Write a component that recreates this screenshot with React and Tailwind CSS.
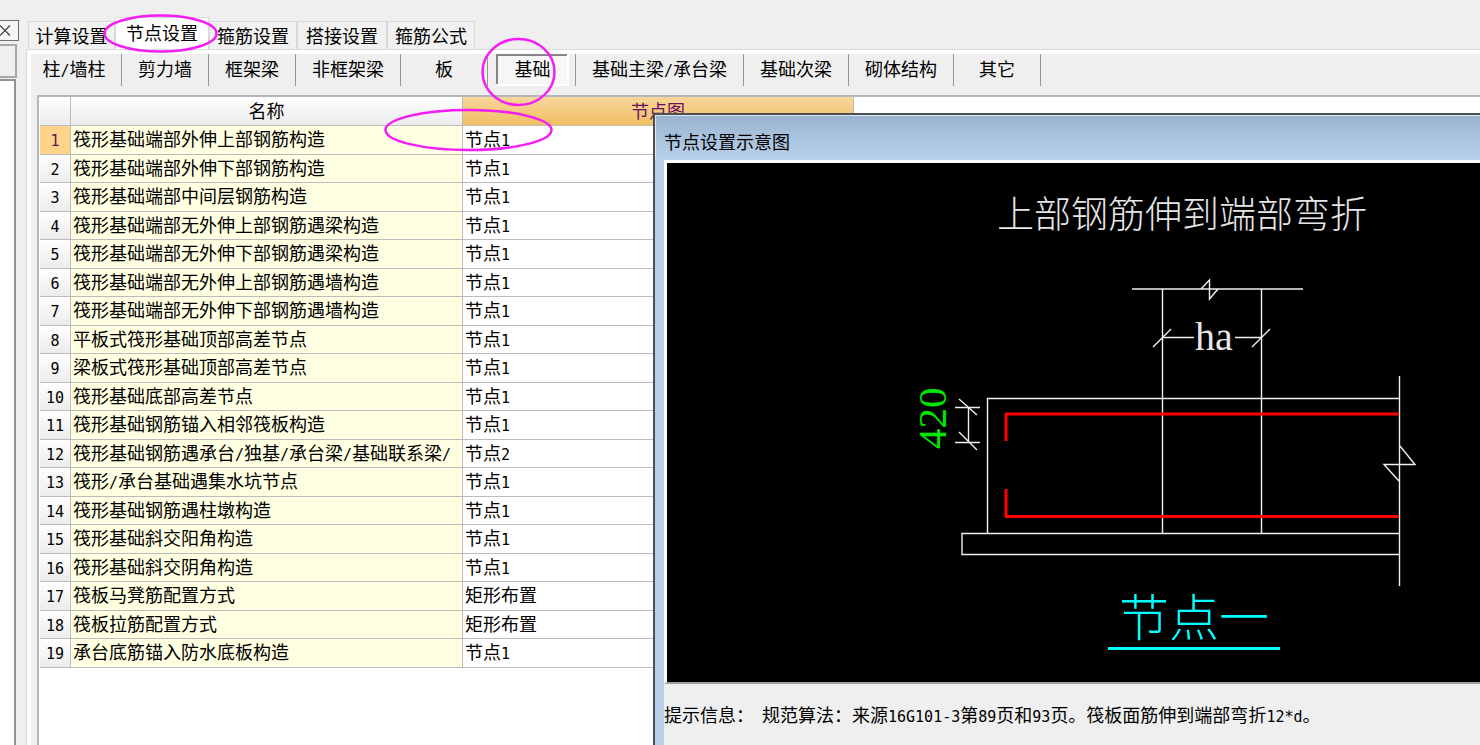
import React from 'react';
import { clsx } from 'clsx';

const mainTabs = [
  { label: '计算设置', width: 'w-[87px]' },
  { label: '节点设置', width: 'w-[94px]', active: true },
  { label: '箍筋设置', width: 'w-[88px]' },
  { label: '搭接设置', width: 'w-[90px]' },
  { label: '箍筋公式', width: 'w-[88px]' },
];

const subTabs = [
  { label: '柱/墙柱', width: 'w-[91px]', pad: 'pr-1' },
  { label: '剪力墙', width: 'w-[87px]' },
  { label: '框架梁', width: 'w-[87px]' },
  { label: '非框架梁', width: 'w-[105px]' },
  { label: '板', width: 'w-[87px]' },
  { label: '基础', width: 'w-[88px]', active: true },
  { label: '基础主梁/承台梁', width: 'w-[168px]' },
  { label: '基础次梁', width: 'w-[105px]' },
  { label: '砌体结构', width: 'w-[105px]' },
  { label: '其它', width: 'w-[87px]' },
];

const rows = [
  ['筏形基础端部外伸上部钢筋构造', '节点1'],
  ['筏形基础端部外伸下部钢筋构造', '节点1'],
  ['筏形基础端部中间层钢筋构造', '节点1'],
  ['筏形基础端部无外伸上部钢筋遇梁构造', '节点1'],
  ['筏形基础端部无外伸下部钢筋遇梁构造', '节点1'],
  ['筏形基础端部无外伸上部钢筋遇墙构造', '节点1'],
  ['筏形基础端部无外伸下部钢筋遇墙构造', '节点1'],
  ['平板式筏形基础顶部高差节点', '节点1'],
  ['梁板式筏形基础顶部高差节点', '节点1'],
  ['筏形基础底部高差节点', '节点1'],
  ['筏形基础钢筋锚入相邻筏板构造', '节点1'],
  ['筏形基础钢筋遇承台/独基/承台梁/基础联系梁/', '节点2'],
  ['筏形/承台基础遇集水坑节点', '节点1'],
  ['筏形基础钢筋遇柱墩构造', '节点1'],
  ['筏形基础斜交阳角构造', '节点1'],
  ['筏形基础斜交阴角构造', '节点1'],
  ['筏板马凳筋配置方式', '矩形布置'],
  ['筏板拉筋配置方式', '矩形布置'],
  ['承台底筋锚入防水底板构造', '节点1'],
];

// Latin runs are set in a half-width face so that two of them fill one CJK cell
const Mixed = ({ text }) =>
  String(text)
    .split(/([\x21-\x7e]+)/)
    .map((part, i) =>
      i % 2 ? (
        <span key={i} className="text-[15px] leading-none font-['DejaVu_Sans_Mono',monospace]">
          {part}
        </span>
      ) : (
        part
      )
    );

const SideStrip = () => (
  <div className="w-[19px] shrink-0 flex flex-col pt-5">
    <button
      aria-label="关闭"
      className="w-[19px] h-[21px] border border-l-0 border-[#707070] bg-[#f4f4f4] flex items-center"
    >
      <svg width="11" height="11" viewBox="0 0 11 11" stroke="#404040" strokeWidth="1.2">
        <path d="M0 0.5 L10 10.5 M10 0.5 L0 10.5" />
      </svg>
    </button>
    <div className="mt-[3px] mr-[2px] h-[34px] border-2 border-l-0 border-[#a8a8a8] bg-[#efefef]" />
    <div className="mt-[1px] mr-[3px] flex-1 border-t-2 border-r-2 border-[#8d949c] bg-white" />
  </div>
);

const MainTabs = () => (
  <div role="tablist" className="flex items-end pl-[2px] h-8">
    {mainTabs.map((tab) => (
      <button
        key={tab.label}
        role="tab"
        aria-selected={!!tab.active}
        className={clsx(
          'whitespace-nowrap border border-b-0 border-[#dadada] flex justify-center',
          tab.width,
          tab.active ? 'h-8 bg-white items-start pt-1' : 'h-[28px] bg-[#f1f1f1] items-center pt-[2px]'
        )}
      >
        {tab.label}
      </button>
    ))}
  </div>
);

const SubTabs = () => (
  <div className="flex items-center h-[32px]">
    {subTabs.map((tab) => (
      <div
        key={tab.label}
        className={clsx('h-8 shrink-0 border-r border-[#969696]', tab.width, tab.active && 'px-2')}
      >
        <button
          className={clsx(
            'w-full h-[30px] whitespace-nowrap',
            tab.pad,
            tab.active
              ? 'border-t-2 border-l-2 border-[#858585] bg-[#f7f7f7] shadow-[1px_1px_0_1px_#fff]'
              : 'pt-[2px]'
          )}
        >
          <Mixed text={tab.label} />
        </button>
      </div>
    ))}
  </div>
);

const NodeTable = () => (
  <table className="table-fixed border-separate border-spacing-0 w-[814px]">
    <colgroup>
      <col className="w-[31px]" />
      <col className="w-[392px]" />
      <col className="w-[391px]" />
    </colgroup>
    <thead>
      <tr className="h-[29px]">
        <th className="border-b border-r border-[#bcbcbc] bg-linear-to-b from-white to-[#ececec]" />
        <th className="p-0 pt-[2px] font-normal border-b border-r border-[#bcbcbc] bg-linear-to-b from-white to-[#ececec]">
          名称
        </th>
        <th className="p-0 pt-[2px] font-normal text-[#69105f] border-b border-r border-[#bcbcbc] bg-linear-to-b from-[#f9d69b] to-[#f0bf60]">
          节点图
        </th>
      </tr>
    </thead>
    <tbody>
      {rows.map(([name, node], i) => (
        <tr key={name} className="odd:h-[29px] even:h-[28px]">
          <th
            scope="row"
            className={clsx(
              'p-0 font-normal border-b border-r border-[#bcbcbc]',
              i === 0 ? 'bg-[#ffd48a] text-[#69105f]' : 'bg-linear-to-b from-white to-[#ececec]'
            )}
          >
            <Mixed text={i + 1} />
          </th>
          <td className="p-0 pl-[2px] whitespace-nowrap overflow-hidden bg-[#ffffe1] border-b border-r border-[#bcbcbc]">
            <Mixed text={name} />
          </td>
          <td className="p-0 pl-[2px] border-b border-r border-[#bcbcbc]">
            <Mixed text={node} />
          </td>
        </tr>
      ))}
    </tbody>
  </table>
);

// Section through the raft edge: column stub, slab, cushion and the two bent bars
const NodeDrawing = () => (
  <svg
    className="block"
    width="813"
    height="519"
    viewBox="667 163 813 519"
    fill="none"
    fontFamily='"Liberation Serif", "Noto Sans CJK SC", serif'
  >
    <text x="997" y="228" fontSize="37" fontWeight="300" fill="#e6e6e6">上部钢筋伸到端部弯折</text>

    <g stroke="#f0f0f0" strokeWidth="1.4">
      <path d="M1132 289H1303 M1201 289L1209.500 280V299L1218 289" />
      <path d="M1162.500 289V533 M1261.500 289V533" />
      <path d="M1163 337.500H1194 M1235 337.500H1261" />
      <path d="M1153 347L1171 329 M1252 347L1270 329" />
      <path d="M1400 398.500H987.500V533.500" />
      <path d="M1400 533.500H962V554.500H1400" />
      <path d="M1399.500 376V586 M1400 446L1415 464.500H1384L1399 481" />
      <path d="M955 407.500H980 M955 442.500H980 M968.500 407V442" />
      <path d="M959 399L977 415 M959 432L977 450" />
    </g>

    <g stroke="#ff0000" strokeWidth="3" strokeLinejoin="round">
      <path d="M1399 414H1006V441" />
      <path d="M1399 516.500H1006V489" />
    </g>

    <text x="1195" y="350" fontSize="40" fill="#e6e6e6">ha</text>
    <text transform="translate(946 449) rotate(-90)" fontSize="41" fill="#00e600">420</text>
    <text x="1119" y="636" fontSize="50" fontWeight="300" fill="#00ffff">节点一</text>
    <path d="M1108 648.500H1280" stroke="#00ffff" strokeWidth="3" />
  </svg>
);

const DiagramWindow = () => (
  <section className="absolute left-[653px] right-0 top-[113px] bottom-0 overflow-hidden flex flex-col border-t-2 border-l-2 border-[#4c4f53] bg-[#b9d1ea]">
    <header className="h-[45px] shrink-0 pl-2 pt-[15px] border-t border-l border-[#dce6f0] bg-linear-to-b from-[#9ab4d0] to-[#b9d1ea]">
      <h2>节点设置示意图</h2>
    </header>
    <div className="ml-[9px] flex-1 flex flex-col bg-[#efefef]">
      <div className="border-t-3 border-l-3 border-t-white border-l-white border-b-2 border-b-[#a0a0a0] bg-black overflow-hidden">
        <NodeDrawing />
      </div>
      <p className="pt-5 whitespace-nowrap">
        提示信息：
        <span className="ml-2">
          <Mixed text="规范算法：来源16G101-3第89页和93页。筏板面筋伸到端部弯折12*d。" />
        </span>
      </p>
    </div>
  </section>
);

// Magenta pen marks over the window
const Marks = () => (
  <svg className="absolute left-0 top-0 pointer-events-none" width="600" height="160" fill="none" stroke="#f51df5" strokeWidth="2.500">
    <ellipse cx="160.500" cy="33.500" rx="56" ry="18" />
    <ellipse cx="518.500" cy="72" rx="36" ry="33" />
    <ellipse cx="468.500" cy="130" rx="83" ry="20" />
  </svg>
);

const App = () => (
  <div className="relative min-h-screen overflow-hidden flex bg-[#efefef] text-black text-lg leading-6 font-['Liberation_Sans','Noto_Sans_CJK_SC',sans-serif]">
    <SideStrip />
    <main className="flex-1 min-w-0 ml-[7px] pt-[17px] flex flex-col">
      <MainTabs />
      <div className="flex-1 flex flex-col pt-1 pl-1 border-t border-l border-[#dadada] bg-white">
        <div className="flex-1 flex flex-col bg-[#efefef]">
          <SubTabs />
          <div className="mt-[9px] ml-[6px] flex-1 border-t-2 border-l-2 border-[#b4b8be] bg-white pl-[1px]">
            <NodeTable />
          </div>
        </div>
      </div>
    </main>
    <DiagramWindow />
    <Marks />
  </div>
);

export default App;
